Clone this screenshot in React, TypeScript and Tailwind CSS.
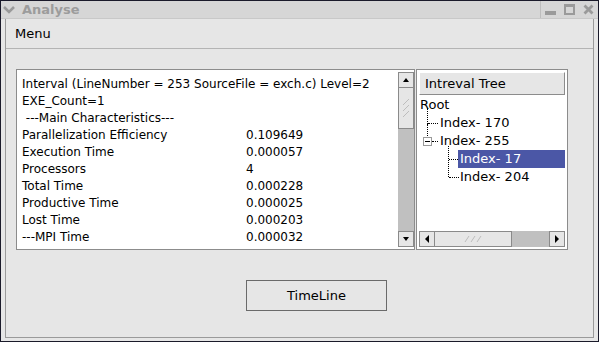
import React from 'react';

const rows: [string, string][] = [
    ['Parallelization Efficiency', '0.109649'],
    ['Execution Time', '0.000057'],
    ['Processors', '4'],
    ['Total Time', '0.000228'],
    ['Productive Time', '0.000025'],
    ['Lost Time', '0.000203'],
    ['---MPI Time', '0.000032'],
];

const ArrowBtn: React.FC<{ dir: 'up' | 'down' | 'left' | 'right' }> = ({ dir }) => {
    const pts = {
        up: '1,5 4,1 7,5',
        down: '1,1 4,5 7,1',
        left: '5,0 1,4 5,8',
        right: '1,0 5,4 1,8',
    }[dir];
    const horiz = dir === 'left' || dir === 'right';
    return (
        <div className="w-[16px] h-[16px] shrink-0 bg-[#e6e6e6] border border-[#8a8a8a] flex items-center justify-center">
            <svg width={horiz ? 6 : 8} height={horiz ? 8 : 6} viewBox={horiz ? '0 0 6 8' : '0 0 8 6'}>
                <polygon points={pts} fill="#000" />
            </svg>
        </div>
    );
};

const Dots: React.FC<{ className: string }> = ({ className }) => (
    <div className={`absolute ${className}`} />
);

const App: React.FC = () => {
    return (
        <div className="w-[599px] h-[342px] bg-[#e6e6e6] flex flex-col overflow-hidden border border-[#1a1a2a] font-['DejaVu_Sans',sans-serif] text-[12px] text-black">
            {/* title bar */}
            <div className="h-[18px] shrink-0 bg-[#d6d6d6] flex items-center border-b border-[#c8c8c8]">
                <svg width="12" height="8" viewBox="0 0 12 8" className="ml-[2px]">
                    <polyline points="1,1 6,6 11,1" fill="none" stroke="#9a9a9a" strokeWidth="2.6" />
                </svg>
                <span className="ml-[7px] text-[13px] font-bold text-[#9c9c9c]">Analyse</span>
                <div className="ml-auto h-full flex items-center border-l border-[#bdbdbd] pl-[4px] gap-[8px] pr-[4px]">
                    <div className="w-[11px] h-[4px] bg-[#9a9a9a] mt-[7px]" />
                    <div className="w-[11px] h-[11px] border-2 border-t-[3px] border-[#9a9a9a]" />
                    <svg width="11" height="11" viewBox="0 0 11 11">
                        <path d="M1.5 1.5 L9.5 9.5 M9.5 1.5 L1.5 9.5" stroke="#9a9a9a" strokeWidth="2.8" />
                    </svg>
                </div>
            </div>

            {/* window frame */}
            <div className="flex-1 ml-[4px] mr-[4px] mb-[3px] border-l border-r border-b border-[#9a9a9a] flex flex-col">
                <div className="h-[30px] shrink-0 flex items-center pl-[9px] pt-[1px] border-b border-[#b4b4b4] text-[13px]">Menu</div>

                <div className="flex-1 flex flex-col pl-[10px] pt-[20px]">
                    <div className="flex">
                        {/* text panel */}
                        <div className="w-[399px] h-[181px] border border-[#8c8c8c] bg-white flex">
                            <div className="flex-1 pl-[5px] pt-[6px] leading-[17px]">
                                <div>Interval (LineNumber = 253 SourceFile = exch.c) Level=2</div>
                                <div>EXE_Count=1</div>
                                <div>&nbsp;---Main Characteristics---</div>
                                {rows.map(([k, v]) => (
                                    <div key={k} className="flex">
                                        <span className="w-[224px]">{k}</span>
                                        <span>{v}</span>
                                    </div>
                                ))}
                            </div>
                            <div className="w-[16px] flex flex-col bg-[#c0c0c0] mt-[2px] mb-[2px]">
                                <ArrowBtn dir="up" />
                                <div className="h-[41px] bg-[#e6e6e6] border border-[#8a8a8a] border-t-0 flex items-center justify-center">
                                    <svg width="8" height="22" viewBox="0 0 8 22">
                                        <path d="M1 8 L7 2 M1 14 L7 8 M1 20 L7 14" stroke="#bdbdbd" strokeWidth="1" />
                                    </svg>
                                </div>
                                <div className="flex-1" />
                                <ArrowBtn dir="down" />
                            </div>
                        </div>

                        {/* tree panel */}
                        <div className="ml-[1px] w-[152px] h-[181px] border border-[#8c8c8c] bg-white flex flex-col p-[2px]">
                            <div className="h-[23px] shrink-0 bg-[#e6e6e6] border border-[#8c8c8c] border-t-white border-l-white flex items-center pl-[5px] text-[13px]">
                                Intreval Tree
                            </div>
                            <div className="flex-1 relative text-[13px] leading-[18px] pt-[1px]">
                                <div className="pl-[1px]">Root</div>
                                <div className="pl-[21px] relative">
                                    Index- 170
                                    <Dots className="left-[8px] top-[-6px] h-[16px] border-l border-dotted border-black" />
                                    <Dots className="left-[9px] top-[9px] w-[10px] border-t border-dotted border-black" />
                                </div>
                                <div className="pl-[21px] relative">
                                    Index- 255
                                    <Dots className="left-[8px] top-[-8px] h-[12px] border-l border-dotted border-black" />
                                    <div className="absolute left-[4px] top-[5px] w-[9px] h-[9px] border border-[#9a9a9a] bg-white flex items-center justify-center">
                                        <div className="w-[5px] h-[1px] bg-black" />
                                    </div>
                                    <Dots className="left-[13px] top-[9px] w-[6px] border-t border-dotted border-black" />
                                </div>
                                <div className="relative h-[18px]">
                                    <div className="absolute left-[39px] right-0 top-0 h-[18px] bg-[#4b57a6] text-white pl-[2px]">Index- 17</div>
                                    <Dots className="left-[29px] top-[-4px] h-[31px] border-l border-dotted border-black" />
                                    <Dots className="left-[30px] top-[9px] w-[9px] border-t border-dotted border-black" />
                                </div>
                                <div className="pl-[41px] relative">
                                    Index- 204
                                    <Dots className="left-[30px] top-[9px] w-[10px] border-t border-dotted border-black" />
                                </div>
                            </div>
                            <div className="h-[16px] shrink-0 flex bg-[#c0c0c0]">
                                <ArrowBtn dir="left" />
                                <div className="w-[77px] bg-[#e6e6e6] border border-[#8a8a8a] border-l-0 flex items-center justify-center">
                                    <svg width="18" height="8" viewBox="0 0 18 8">
                                        <path d="M1 7 L5 1 M7 7 L11 1 M13 7 L17 1" stroke="#bdbdbd" strokeWidth="1" />
                                    </svg>
                                </div>
                                <div className="flex-1" />
                                <ArrowBtn dir="right" />
                            </div>
                        </div>
                    </div>

                    <div className="flex mt-[30px]">
                        <button className="ml-[230px] w-[141px] h-[31px] bg-[#e6e6e6] border border-[#6a6a6a] text-[13px]">
                            TimeLine
                        </button>
                    </div>
                </div>
            </div>
        </div>
    );
};

export default App;
